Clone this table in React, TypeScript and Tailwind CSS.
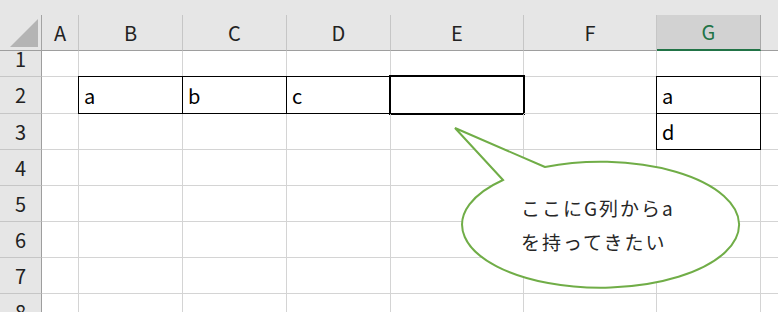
const FONT = "font-['Noto_Sans_CJK_JP','Noto_Sans',sans-serif]";
const GRID =
  "grid grid-cols-[42px_37px_104px_104px_104px_133px_133px_104px_104px]";

const COLUMNS = ["A", "B", "C", "D", "E", "F", "G", "H"];

type Border = "thin" | "thick";

type RowDef = {
  n: number;
  h: string;
  cells: Record<string, { text?: string; border?: Border }>;
};

const ROWS: RowDef[] = [
  { n: 1, h: "h-[36px] -mt-[10px]", cells: {} },
  {
    n: 2,
    h: "h-[37px]",
    cells: {
      B: { text: "a", border: "thin" },
      C: { text: "b", border: "thin" },
      D: { text: "c", border: "thin" },
      E: { border: "thick" },
      G: { text: "a", border: "thin" },
    },
  },
  { n: 3, h: "h-[36px]", cells: { G: { text: "d", border: "thin" } } },
  { n: 4, h: "h-[36px]", cells: {} },
  { n: 5, h: "h-[36px]", cells: {} },
  { n: 6, h: "h-[36px]", cells: {} },
  { n: 7, h: "h-[36px]", cells: {} },
  { n: 8, h: "h-[36px]", cells: {} },
];

function ColumnHeader() {
  return (
    <div className="h-[51px] bg-[#e6e6e6] pt-[15px]">
      <div className={`${GRID} h-[36px]`}>
        <div className="relative border-r border-b border-r-[#a3a3a3] border-b-[#9e9e9e]">
          <svg
            width="42"
            height="35"
            viewBox="0 0 42 35"
            className="absolute left-0 top-0"
            aria-hidden
          >
            <polygon points="10,32 38,32 38,4" fill="#b4b4b4" />
          </svg>
        </div>
        {COLUMNS.map((c) =>
          c === "G" ? (
            <div
              key={c}
              className="flex items-center justify-center bg-[#d2d2d2] border-r border-r-[#a8a8a8] border-b-2 border-b-[#217346] text-[20px] text-[#217346]"
            >
              {c}
            </div>
          ) : (
            <div
              key={c}
              className="flex items-center justify-center border-r border-r-[#c6c6c6] border-b border-b-[#9e9e9e] text-[20px] text-[#222]"
            >
              {/* H sits past the right edge; only its strip shows */}
              {c === "H" ? null : c}
            </div>
          )
        )}
      </div>
    </div>
  );
}

function Cell({ text, border }: { text?: string; border?: Border }) {
  return (
    <div className="relative flex items-end border-r border-b border-[#d4d4d4] pl-[5px] pb-[5px] text-[20px] leading-[24px] text-black">
      {border === "thin" && (
        <div className="absolute -left-px -top-px -right-px -bottom-px border border-black" />
      )}
      {border === "thick" && (
        <div className="absolute -left-[2px] -top-[2px] -right-[2px] -bottom-[2px] border-2 border-black" />
      )}
      {text && <span className="relative">{text}</span>}
    </div>
  );
}

function Callout() {
  return (
    <>
      <svg
        width="778"
        height="312"
        viewBox="0 0 778 312"
        className="absolute left-0 top-0 pointer-events-none"
        aria-hidden
      >
        <path
          d="M545 167 L455 128 L503 180 A138.5 63 0 1 0 545 167 Z"
          fill="#ffffff"
          stroke="#70ad47"
          strokeWidth="2"
          strokeLinejoin="miter"
        />
      </svg>
      <div className="absolute left-[521px] top-[191px] text-[19px] leading-[34px] tracking-[2px] text-[#262626]">
        <div>ここにG列からa</div>
        <div>を持ってきたい</div>
      </div>
    </>
  );
}

export default function App() {
  return (
    <div
      className={`relative h-[312px] w-[778px] overflow-hidden bg-white ${FONT}`}
    >
      <ColumnHeader />
      <div className="h-[261px] overflow-hidden">
        {ROWS.map((r) => (
          <div key={r.n} className={`${GRID} ${r.h}`}>
            <div className="flex items-center justify-center bg-[#e6e6e6] border-r border-b border-r-[#9e9e9e] border-b-[#c6c6c6] text-[20px] text-[#222]">
              {r.n}
            </div>
            {COLUMNS.map((c) => (
              <Cell key={c} {...(r.cells[c] ?? {})} />
            ))}
          </div>
        ))}
      </div>
      <Callout />
    </div>
  );
}
